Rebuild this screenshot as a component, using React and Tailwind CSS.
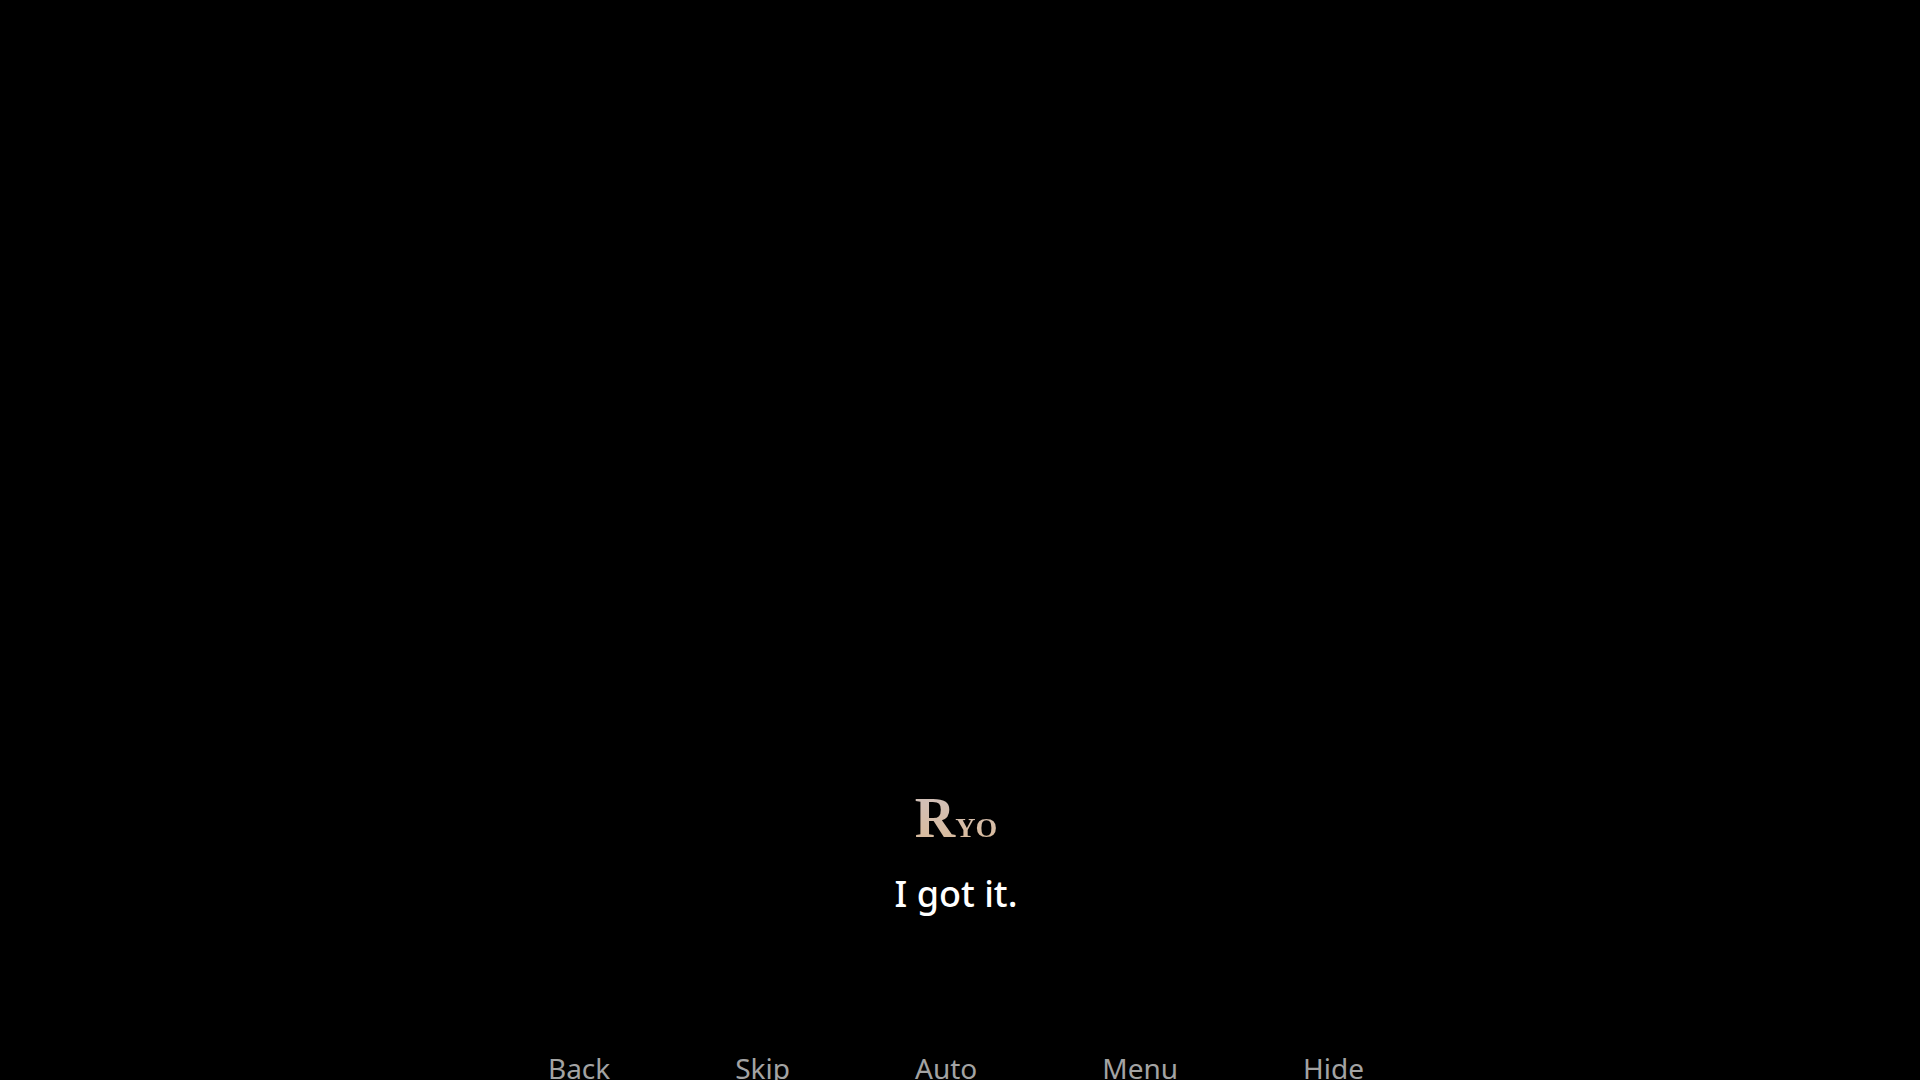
const actions = ['Back', 'Skip', 'Auto', 'Menu', 'Hide']

function Dialogue({ speaker, line }) {
  return (
    <section className="mr-2 flex flex-col items-center">
      <h1 className="bg-gradient-to-b from-[#cfc0bd] to-[#dcba94] bg-clip-text font-['Liberation_Serif',serif] text-[40px] leading-[60px] font-bold text-transparent [font-variant-caps:small-caps] first-letter:text-[56px] first-letter:leading-[60px]">
        {speaker}
      </h1>
      <p className="mt-4 font-['Noto_Sans',sans-serif] text-4xl leading-[48px] font-medium text-white">
        {line}
      </p>
    </section>
  )
}

export default function App() {
  return (
    <main className="flex h-screen flex-col items-center justify-end overflow-hidden bg-black">
      <Dialogue speaker="Ryo" line="I got it." />

      <nav className="mt-[138px] mr-2 flex gap-[125px] font-['Noto_Sans',sans-serif] text-[28px] leading-[24px] text-[#a3a3a3]">
        {actions.map((label) => (
          <button key={label} type="button" className="hover:text-white">
            {label}
          </button>
        ))}
      </nav>
    </main>
  )
}
